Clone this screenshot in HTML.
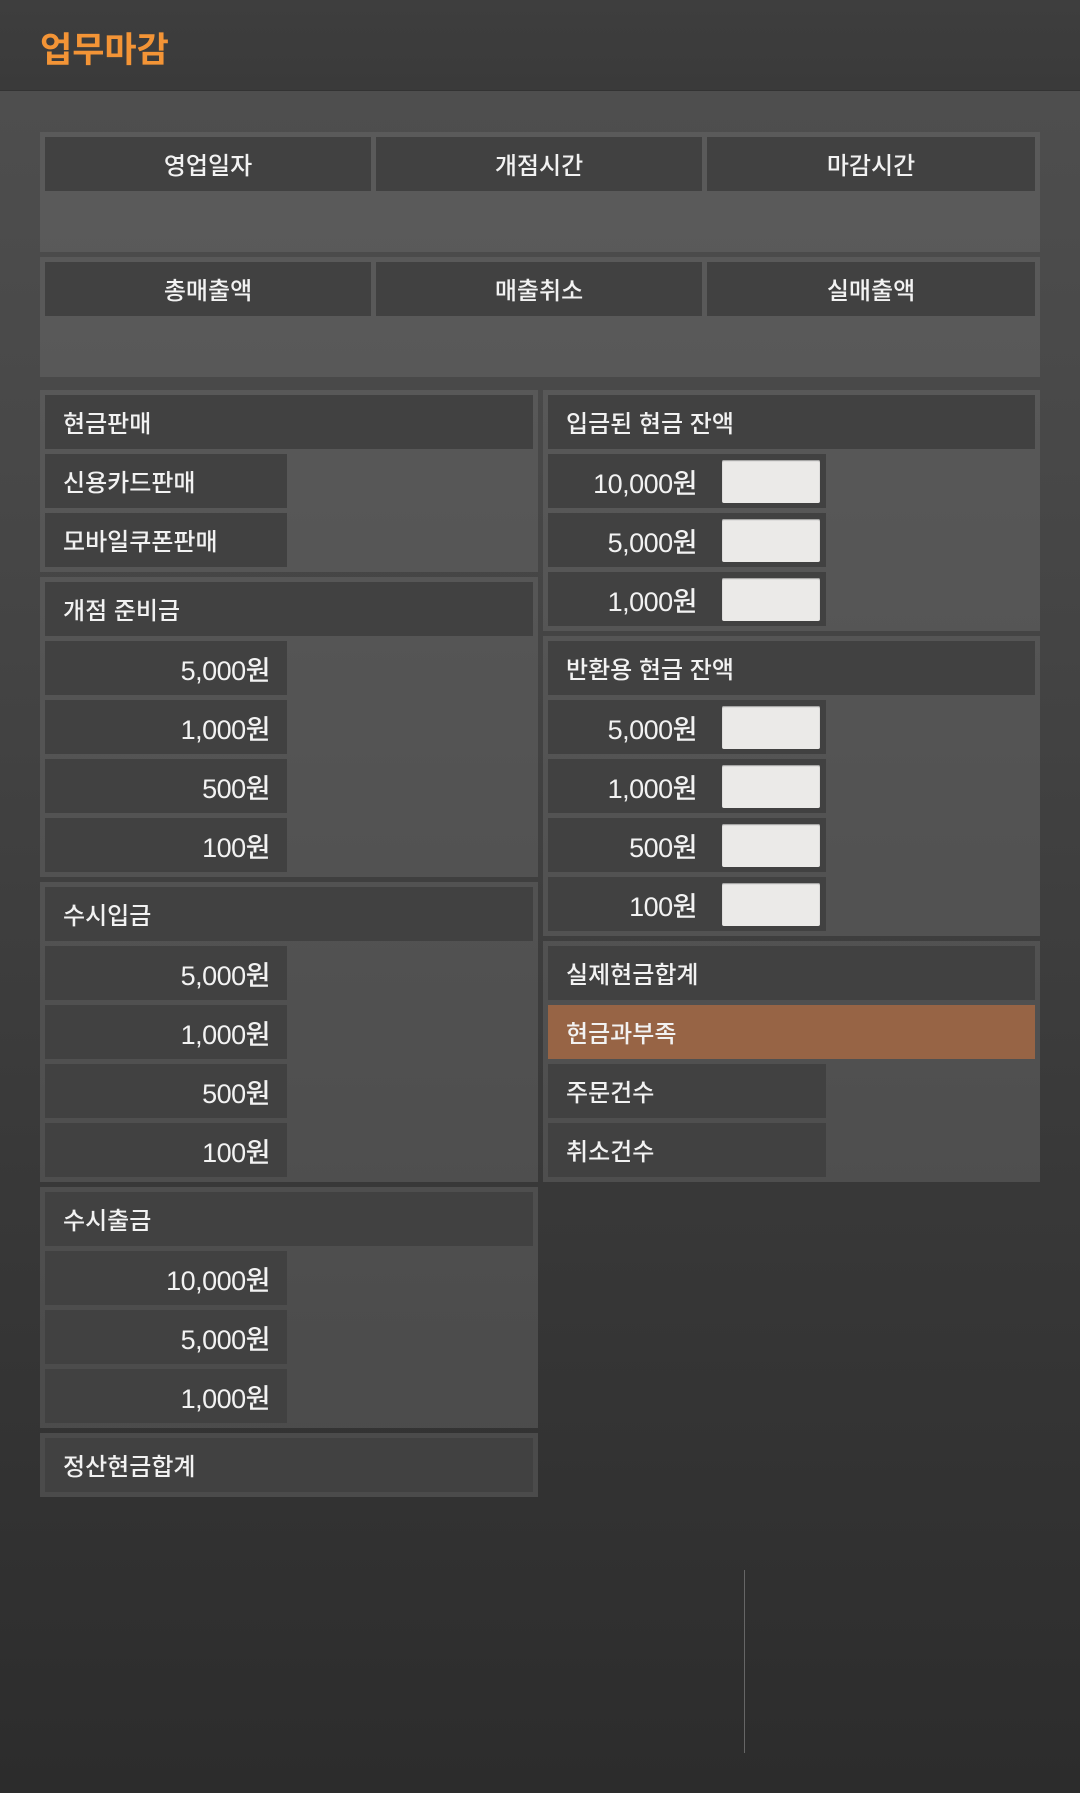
<!DOCTYPE html>
<html><head><meta charset="utf-8"><style>
*{margin:0;padding:0;box-sizing:border-box}
body{width:1080px;height:1793px;position:relative;overflow:hidden;background:linear-gradient(#4e4e4e 90px,#474747 500px,#3a3a3a 1100px,#2c2c2c 1793px);font-family:"Liberation Sans","Noto Sans CJK KR",sans-serif;color:#f2f2f2}
.top{position:absolute;left:0;top:0;width:1080px;height:91px;background:linear-gradient(#3e3e3e,#3a3a3a);border-bottom:1px solid #333}
.top span{position:absolute;left:40px;top:22px;font-size:35px;font-weight:bold;color:#f39436;font-family:"Noto Sans CJK KR",sans-serif}
.box{position:absolute;background:rgba(110,110,110,.42)}
.c{position:absolute;background:#414141;height:54px;font-size:24px;line-height:60px;font-weight:500}
.h{padding-left:18px}
.ctr{text-align:center}
.n{text-align:right;padding-right:17px;font-size:27px;letter-spacing:-0.5px}
.in{position:absolute;width:98px;height:43px;background:#ebeae8;border-radius:2px;box-shadow:inset 0 1px 1px #999}
.line{position:absolute;left:744px;top:1570px;width:1px;height:183px;background:#666}
</style></head><body>
<div class="top"><span>업무마감</span></div>

<div class="box" style="left:40px;top:132px;width:1000px;height:120px"></div>
<div class="c ctr" style="left:45px;top:137px;width:326px">영업일자</div>
<div class="c ctr" style="left:376px;top:137px;width:326px">개점시간</div>
<div class="c ctr" style="left:707px;top:137px;width:328px">마감시간</div>

<div class="box" style="left:40px;top:257px;width:1000px;height:120px"></div>
<div class="c ctr" style="left:45px;top:262px;width:326px">총매출액</div>
<div class="c ctr" style="left:376px;top:262px;width:326px">매출취소</div>
<div class="c ctr" style="left:707px;top:262px;width:328px">실매출액</div>

<div class="box" style="left:40px;top:390px;width:498px;height:182px"></div>
<div class="c h" style="left:45px;top:395px;width:488px">현금판매</div>
<div class="c h" style="left:45px;top:454px;width:242px">신용카드판매</div>
<div class="c h" style="left:45px;top:513px;width:242px">모바일쿠폰판매</div>

<div class="box" style="left:40px;top:577px;width:498px;height:300px"></div>
<div class="c h" style="left:45px;top:582px;width:488px">개점 준비금</div>
<div class="c n" style="left:45px;top:641px;width:242px">5,000원</div>
<div class="c n" style="left:45px;top:700px;width:242px">1,000원</div>
<div class="c n" style="left:45px;top:759px;width:242px">500원</div>
<div class="c n" style="left:45px;top:818px;width:242px">100원</div>

<div class="box" style="left:40px;top:882px;width:498px;height:300px"></div>
<div class="c h" style="left:45px;top:887px;width:488px">수시입금</div>
<div class="c n" style="left:45px;top:946px;width:242px">5,000원</div>
<div class="c n" style="left:45px;top:1005px;width:242px">1,000원</div>
<div class="c n" style="left:45px;top:1064px;width:242px">500원</div>
<div class="c n" style="left:45px;top:1123px;width:242px">100원</div>

<div class="box" style="left:40px;top:1187px;width:498px;height:241px"></div>
<div class="c h" style="left:45px;top:1192px;width:488px">수시출금</div>
<div class="c n" style="left:45px;top:1251px;width:242px">10,000원</div>
<div class="c n" style="left:45px;top:1310px;width:242px">5,000원</div>
<div class="c n" style="left:45px;top:1369px;width:242px">1,000원</div>

<div class="box" style="left:40px;top:1433px;width:498px;height:64px"></div>
<div class="c h" style="left:45px;top:1438px;width:488px">정산현금합계</div>

<div class="box" style="left:543px;top:390px;width:497px;height:241px"></div>
<div class="c h" style="left:548px;top:395px;width:487px">입금된 현금 잔액</div>
<div class="c n" style="left:548px;top:454px;width:278px;padding-right:129px">10,000원</div>
<div class="c n" style="left:548px;top:513px;width:278px;padding-right:129px">5,000원</div>
<div class="c n" style="left:548px;top:572px;width:278px;padding-right:129px">1,000원</div>
<div class="in" style="left:722px;top:460px"></div>
<div class="in" style="left:722px;top:519px"></div>
<div class="in" style="left:722px;top:578px"></div>

<div class="box" style="left:543px;top:636px;width:497px;height:300px"></div>
<div class="c h" style="left:548px;top:641px;width:487px">반환용 현금 잔액</div>
<div class="c n" style="left:548px;top:700px;width:278px;padding-right:129px">5,000원</div>
<div class="c n" style="left:548px;top:759px;width:278px;padding-right:129px">1,000원</div>
<div class="c n" style="left:548px;top:818px;width:278px;padding-right:129px">500원</div>
<div class="c n" style="left:548px;top:877px;width:278px;padding-right:129px">100원</div>
<div class="in" style="left:722px;top:706px"></div>
<div class="in" style="left:722px;top:765px"></div>
<div class="in" style="left:722px;top:824px"></div>
<div class="in" style="left:722px;top:883px"></div>

<div class="box" style="left:543px;top:941px;width:497px;height:241px"></div>
<div class="c h" style="left:548px;top:946px;width:487px">실제현금합계</div>
<div class="c h" style="left:548px;top:1005px;width:487px;background:#976445">현금과부족</div>
<div class="c h" style="left:548px;top:1064px;width:278px">주문건수</div>
<div class="c h" style="left:548px;top:1123px;width:278px">취소건수</div>

<div class="line"></div>
</body></html>
